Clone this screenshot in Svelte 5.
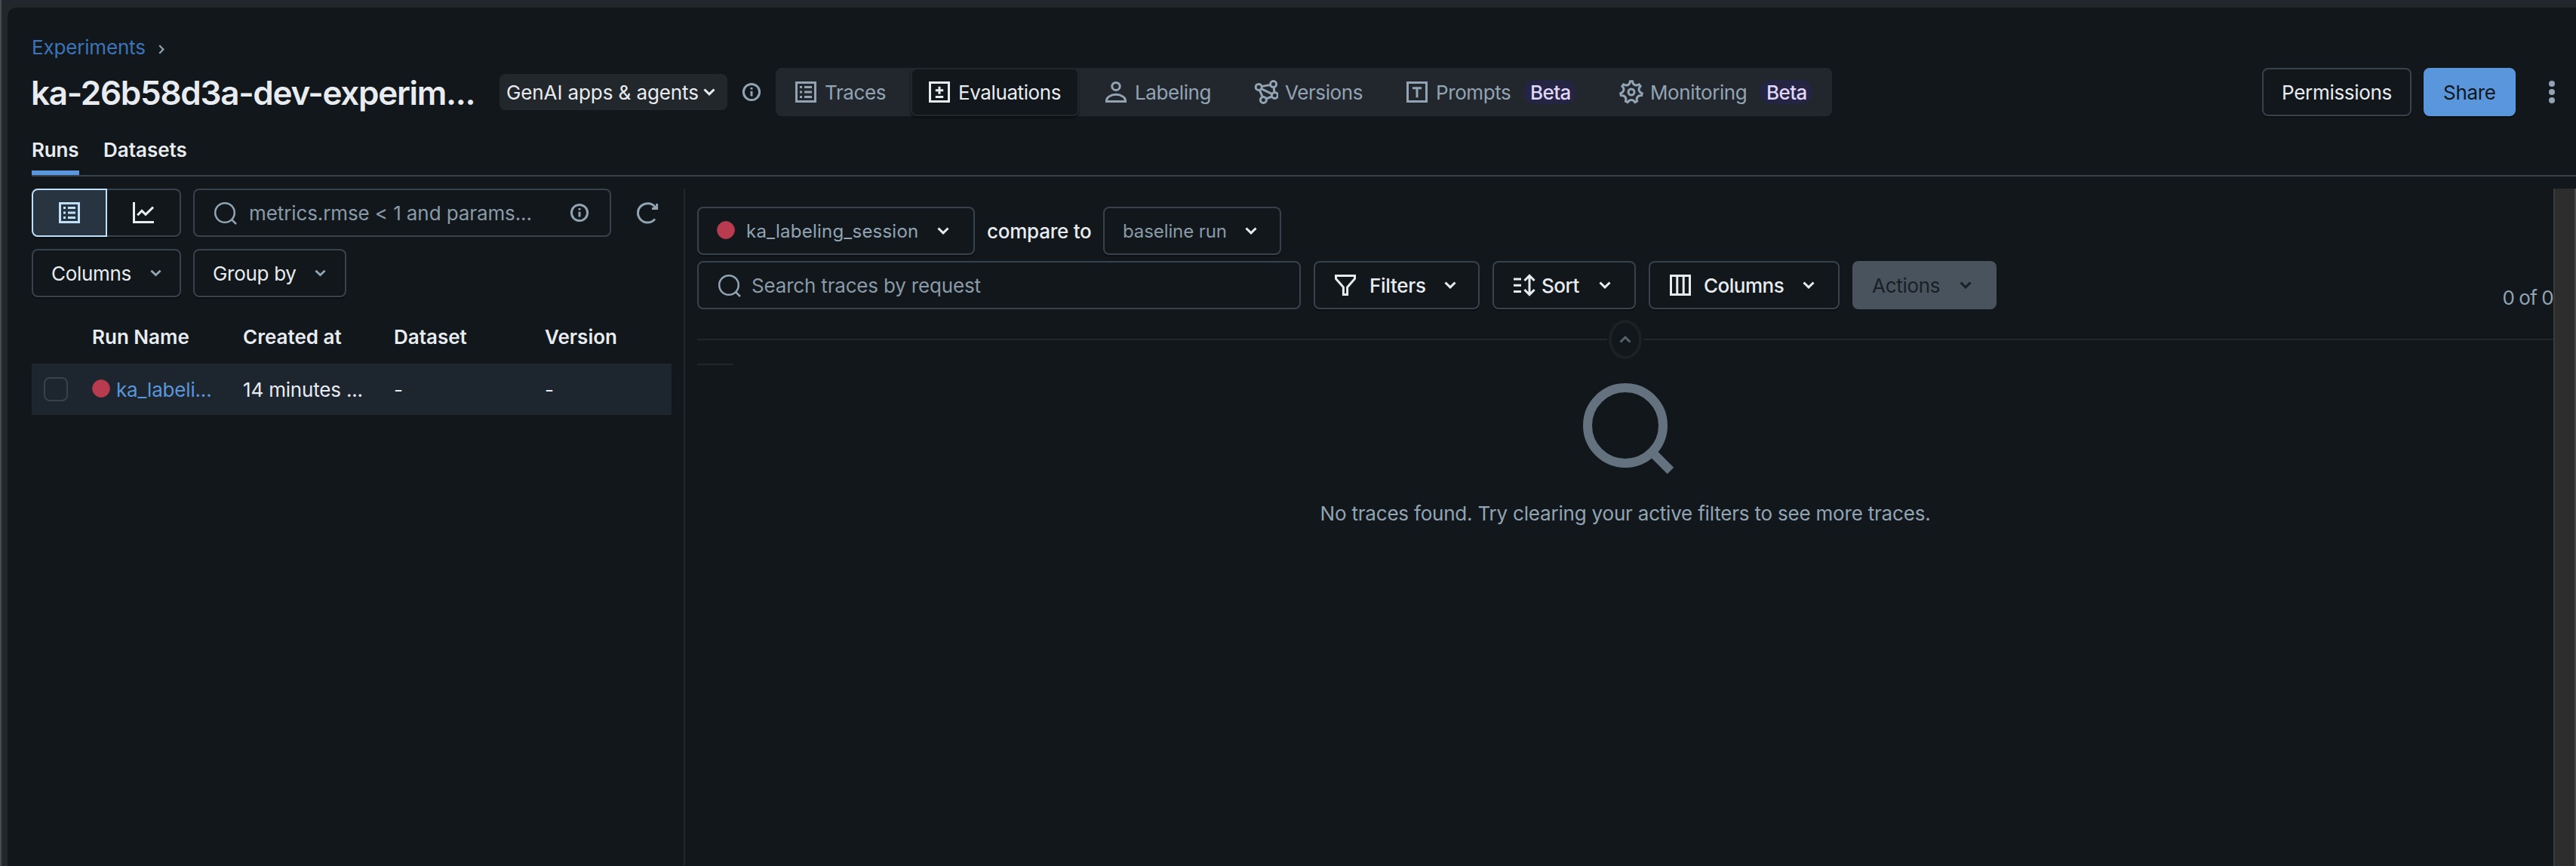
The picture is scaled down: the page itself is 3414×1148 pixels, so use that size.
<script>
  // Outline of the seven-toothed gear, in a 16-unit box
  function gearPath() {
    const pt = (r, deg) => {
      const a = ((deg - 90) * Math.PI) / 180;
      return `${(8 + r * Math.cos(a)).toFixed(2)} ${(8 + r * Math.sin(a)).toFixed(2)}`;
    };
    const step = 360 / 7;
    let d = '';
    for (let k = 0; k < 7; k++) {
      const a = k * step;
      d += `${k ? 'L' : 'M'}${pt(5.9, a - 11)}L${pt(7.2, a - 6)}L${pt(7.2, a + 6)}L${pt(5.9, a + 11)}Q${pt(4.7, a + step / 2)} ${pt(5.9, a + step - 11)}`;
    }
    return d + 'Z';
  }

  const box = 'M1.75 1.75h12.5v12.5H1.75z';
  const icons = {
    list: box + 'M4 4.75h1.5M7 4.75h5M4 8h1.5M7 8h5M4 11.25h1.5M7 11.25h5',
    plusminus: box + 'M5.4 6.9h5.2M8 4.4v5M5.4 11.2h5.2',
    user: 'M10.6 4.2a2.6 2.5 0 1 1-5.2 0a2.6 2.5 0 1 1 5.2 0zM1.75 14.25h12.5v-.6c0-1.9-2.6-4-6.25-4s-6.25 2.1-6.25 4z',
    models:
      'M5.1 4.7a2 2 0 1 1-4 0a2 2 0 1 1 4 0zM14.8 2.8a2 2 0 1 1-4 0a2 2 0 1 1 4 0zM15.7 10.2a2 2 0 1 1-4 0a2 2 0 1 1 4 0zM8.2 13.2a2 2 0 1 1-4 0a2 2 0 1 1 4 0zM5 4.3l5.9-1.1M4.7 5.8l7.3 3.5M3.6 6.6l2.1 4.7M13.1 4.8l.3 3.4M8 12.5l3.8-1.5',
    prompt: box + 'M5 5.4h6M8 5.4v6.2',
    gear: gearPath() + 'M10 8a2 2 0 1 1-4 0a2 2 0 1 1 4 0z',
    chart: 'M1.75 1v13.25H15M4.1 9.6l2.9-2.9 2.5 2.5 5-4.9',
    search: 'M14.4 8a6.4 6.4 0 1 1-12.8 0a6.4 6.4 0 1 1 12.8 0zM12.4 12.4l3.1 3.1',
    info: 'M13.3 8a5.3 5.3 0 1 1-10.6 0a5.3 5.3 0 1 1 10.6 0zM8 7.4v3.3M8 5v1.3',
    refresh: 'M13 12.2A6.35 6.35 0 1 1 13.4 4.7M14.3 2v3.3H11',
    filter: 'M1.75 1.75h12.5v2L9.3 9.4v4.85H6.7V9.4L1.75 3.75z',
    sort: 'M1 4h5M1 8.1h5M1 12.2h5M11.5 1.8v12.4M8.2 5l3.3-3.3L14.8 5M8.2 11l3.3 3.3 3.3-3.3',
    columns: box + 'M5.9 1.75v12.5M10.1 1.75v12.5'
  };

  const tabs = [
    { icon: 'list', label: 'Traces', cls: 'traces' },
    { icon: 'plusminus', label: 'Evaluations', cls: 'evals', active: true },
    { icon: 'user', label: 'Labeling', cls: 'labeling' },
    { icon: 'models', label: 'Versions', cls: 'versions' },
    { icon: 'prompt', label: 'Prompts', cls: 'prompts', beta: true },
    { icon: 'gear', label: 'Monitoring', cls: 'monitoring', beta: true }
  ];
</script>

{#snippet icon(name, thin)}
  <svg class="icon" class:thin viewBox="0 0 16 16"><path d={icons[name]} /></svg>
{/snippet}

{#snippet chevron()}
  <svg class="chev" viewBox="0 0 16 10"><path d="M1.5 1.5 8 7.8l6.5-6.3" /></svg>
{/snippet}

<div class="app">
  <main class="panel">
    <header>
      <nav class="crumbs">
        <span>Experiments</span>
        <svg viewBox="0 0 8 13"><path d="M1.2 1.2 6.4 6.5 1.2 11.8" /></svg>
      </nav>
      <div class="titlerow">
        <h1>ka-26b58d3a-dev-experim...</h1>
        <div class="kind"><span>GenAI apps &amp; agents</span>{@render chevron()}</div>
        <div class="kindinfo">{@render icon('info')}</div>
        <div class="modes">
          {#each tabs as t}
            <div class="mode {t.cls}" class:active={t.active}>
              {@render icon(t.icon)}<span>{t.label}</span>
              {#if t.beta}<em>Beta</em>{/if}
            </div>
          {/each}
        </div>
        <div class="spacer"></div>
        <button class="btn perms"><span>Permissions</span></button>
        <button class="btn share"><span>Share</span></button>
        <div class="kebab"><i></i><i></i><i></i></div>
      </div>
      <div class="subtabs">
        <div class="sub on"><span>Runs</span></div>
        <div class="sub"><span>Datasets</span></div>
      </div>
    </header>

    <div class="body">
      <section class="left">
        <div class="tools">
          <div class="seg">
            <div class="on">{@render icon('list')}</div>
            <div class="off">{@render icon('chart')}</div>
          </div>
          <div class="field runs">
            {@render icon('search', true)}<span>metrics.rmse &lt; 1 and params...</span>{@render icon('info')}
          </div>
          <div class="refresh">{@render icon('refresh')}</div>
        </div>
        <div class="tools second">
          <button class="btn cols"><span>Columns</span>{@render chevron()}</button>
          <button class="btn group"><span>Group by</span>{@render chevron()}</button>
        </div>
        <div class="thead">
          <span></span><span>Run Name</span><span>Created at</span><span>Dataset</span><span>Version</span>
        </div>
        <div class="trow">
          <span class="check"></span>
          <span class="run"><b class="dot"></b><a href="#run">ka_labeli...</a></span>
          <span>14 minutes ...</span>
          <span>-</span>
          <span>-</span>
        </div>
      </section>

      <section class="right">
        <div class="compare">
          <button class="btn sel session"><b class="dot"></b><span>ka_labeling_session</span>{@render chevron()}</button>
          <span class="cmp">compare to</span>
          <button class="btn sel base"><span>baseline run</span>{@render chevron()}</button>
        </div>
        <div class="filters">
          <div class="field traces">{@render icon('search', true)}<span>Search traces by request</span></div>
          <button class="btn tool f">{@render icon('filter')}<span>Filters</span>{@render chevron()}</button>
          <button class="btn tool s">{@render icon('sort')}<span>Sort</span>{@render chevron()}</button>
          <button class="btn tool c">{@render icon('columns')}<span>Columns</span>{@render chevron()}</button>
          <button class="btn tool a"><span>Actions</span>{@render chevron()}</button>
          <span class="count">0 of 0</span>
        </div>
        <div class="fold">
          <hr />
          <div class="knob">{@render chevron()}</div>
          <hr />
        </div>
        <div class="stub"></div>
        <div class="empty">
          <svg viewBox="0 0 120 120"><circle cx="56" cy="56" r="50" /><path d="M91 91l25 25" /></svg>
          <p>No traces found. Try clearing your active filters to see more traces.</p>
        </div>
      </section>
      <div class="track"></div>
    </div>
  </main>
</div>

<style>
  :global(body) { background: #22272b; overflow: hidden; }
  .app, .app * { box-sizing: border-box; }
  .app {
    width: 3414px; height: 1148px; padding: 10px 0 0 8px;
    border-left: 2px solid #484c50;
    background: linear-gradient(#22272f, #22272b 10px);
    font: 400 26px/32px Inter, "Liberation Sans", sans-serif;
    letter-spacing: -0.18px; color: #e8ecf0; white-space: nowrap; overflow: hidden;
  }
  .panel { display: flex; flex-direction: column; height: 1138px; background: #11171b; border-top-left-radius: 12px; }
  svg { fill: none; stroke: currentColor; flex: none; display: block; }
  .icon { width: 32px; height: 32px; stroke-width: 1.5; }
  .icon.thin { stroke-width: 1.25; }
  .chev { width: 16px; height: 10px; stroke-width: 3; }
  .spacer { flex: 1; }

  .crumbs { display: flex; align-items: center; height: 40px; margin: 33px 0 7px 32px; color: #3b74b8; }
  .crumbs svg { width: 8px; height: 13px; margin: 4px 0 0 17px; stroke: #92a4b3; stroke-width: 2.2; }
  .titlerow { display: flex; align-items: center; height: 64px; padding-left: 31px; }
  h1 { margin: 0; width: 621px; font-size: 44px; line-height: 64px; padding-top: 2px; font-weight: 600; letter-spacing: -1.28px; }
  .kind { display: flex; align-items: center; width: 302px; height: 48px; padding-left: 8px; border-radius: 8px; background: #22272b; }
  .kind span { width: 262px; padding: 1px 0 0 1px; letter-spacing: -0.1px; }
  .kindinfo { margin-left: 16px; color: #92a4b3; width: 48px; }
  .modes { display: flex; width: 1400px; height: 64px; border-radius: 8px; background: #22272e; color: #92a4b3; }
  .mode { display: flex; align-items: center; padding-left: 24px; letter-spacing: -0.4px; }
  .mode span { margin-left: 9px; padding-top: 1px; }
  .traces.mode { width: 179px; }
  .evals { width: 223px; }
  .labeling { width: 221px; padding-left: 33px; }
  .versions { width: 202px; padding-left: 11px; }
  .prompts { width: 284px; padding-left: 9px; }
  .monitoring { padding-left: 9px; }
  .mode.active { margin: 0; background: #11171b; border: 2px solid #22272b; border-radius: 8px; color: #e8ecf0; box-shadow: 0 2px 2px #0a0e11; padding-left: 20px; }
  .mode em { width: 70px; height: 32px; margin-left: 17px; padding: 1px 0 0 1px; border-radius: 16px; background: #242443; color: #e2d7fa; font-style: normal; font-weight: 500; text-align: center; letter-spacing: -0.6px; }

  .btn {
    display: flex; align-items: center; height: 64px; flex: none; padding: 0 0 0 24px;
    border: 2px solid #37424c; border-radius: 8px; background: #11171b; color: #e8ecf0;
    font: inherit; letter-spacing: -0.3px; box-shadow: 0 2px 0 #0b0f12; text-align: left;
  }
  .btn span { padding-top: 1px; }
  .perms { width: 198px; margin-right: 16px; }
  .share { width: 122px; background: #5a96db; border-color: #5a96db; color: #11171b; }
  .kebab { display: flex; flex-direction: column; gap: 3px; align-items: center; margin: 0 27px 0 43px; width: 10px; }
  .kebab i { width: 8px; height: 8px; border-radius: 50%; background: #92a4b3; }

  .subtabs { display: flex; height: 62px; margin: 18px 0 16px 32px; border-bottom: 2px solid #37424c; font-weight: 600; }
  .sub { height: 60px; margin-right: 32px; border-bottom: 6px solid transparent; line-height: 54px; letter-spacing: 0; }
  .sub.on { width: 63px; border-color: #5a96db; letter-spacing: -0.2px; }

  .body { display: flex; flex: 1; }
  .left { width: 898px; padding-left: 32px; border-right: 2px solid #22272b; }
  .tools { display: flex; gap: 16px; height: 64px; }
  .second { margin-top: 16px; }
  .seg { display: flex; width: 198px; box-shadow: 0 2px 0 #0b0f12; border-radius: 8px; }
  .seg div { display: flex; align-items: center; justify-content: center; border: 2px solid #37424c; }
  .seg .on { width: 100px; background: #28343f; border-color: #bfe0fb; color: #bfe0fb; border-radius: 8px 0 0 8px; }
  .seg .off { width: 98px; border-left: 0; border-radius: 0 8px 8px 0; }
  .field { display: flex; align-items: center; height: 64px; border: 2px solid #37424c; border-radius: 8px; padding-left: 24px; color: #8a9aa8; }
  .field .icon { color: #92a4b3; }
  .field.runs { width: 554px; }
  .field.runs span { width: 438px; padding: 1px 0 0 16px; letter-spacing: -0.1px; }
  .refresh { display: flex; align-items: center; margin-left: 16px; color: #92a4b3; }
  .cols { width: 198px; }
  .cols span { width: 131px; }
  .group { width: 203px; }
  .group span { width: 135px; }
  .second .chev { width: 15px; color: #92a4b3; }
  .thead, .trow { display: grid; grid-template-columns: 80px 200px 200px 200px 168px; align-items: center; width: 848px; }
  .thead { height: 88px; padding-top: 18px; font-weight: 600; letter-spacing: 0; }
  .trow { height: 68px; background: #1d252e; border: solid #22272b; border-width: 2px 0; }
  .check { width: 32px; height: 32px; margin-left: 16px; border: 2px solid #37424c; border-radius: 8px; }
  .dot { width: 24px; height: 24px; border: 1px solid #a5384a; border-radius: 50%; background: #b83b4f; flex: none; }
  .run { display: flex; align-items: center; }
  .run .dot { margin: -4px 8px 0 0; }
  .run a { color: #5a96db; text-decoration: none; }
  .trow > span:nth-child(n + 2) { padding-top: 2px; }

  .right { width: 2476px; padding: 24px 0 0 16px; }
  .compare, .filters { display: flex; align-items: center; height: 64px; }
  .filters { margin-top: 8px; }
  .sel { font-size: 24px; color: #92a4b3; }
  .sel .chev { color: #e8ecf0; }
  .session { width: 368px; letter-spacing: 0.22px; }
  .session .dot { margin: -2px 15px 0 0; }
  .session span { width: 253px; }
  .cmp { width: 170px; padding: 2px 0 0 16px; font-weight: 500; letter-spacing: -0.25px; }
  .base { width: 236px; letter-spacing: -0.1px; color: #8a9aa8; }
  .base span { width: 162px; }
  .field.traces { width: 800px; }
  .field.traces span { padding: 1px 0 0 14px; }
  .tool { margin-left: 17px; font-weight: 500; }
  .f { width: 220px; }
  .f span { width: 115px; padding-left: 16px; }
  .s { width: 190px; }
  .s span { width: 83px; padding-left: 7px; letter-spacing: -0.5px; }
  .c { width: 253px; }
  .c span { width: 146px; padding-left: 15px; letter-spacing: -0.5px; }
  .a { width: 191px; background: #48535e; border-color: #48535e; color: #181f25; font-weight: 400; box-shadow: none; }
  .a span { width: 116px; }
  .count { flex: 1; align-self: flex-end; height: 32px; margin-bottom: -1px; text-align: right; color: #92a4b3; letter-spacing: -0.6px; word-spacing: -0.8px; }
  .fold { display: flex; align-items: center; height: 52px; margin-top: 14px; }
  .fold hr { flex: none; height: 2px; margin: 0; border: 0; background: #22272b; }
  .fold hr:first-child { width: 1206px; }
  .fold hr:last-child { flex: 1; }
  .knob { display: flex; align-items: center; justify-content: center; width: 44px; height: 52px; margin: 0 2px; border: 4px solid #1b2125; border-radius: 50%; color: #55616b; }
  .knob .chev { transform: rotate(180deg); }
  .stub { width: 48px; height: 2px; margin-top: 6px; background: #22272b; }
  .empty { display: flex; flex-direction: column; align-items: center; margin-top: 24px; }
  .empty svg { width: 120px; height: 120px; margin-left: 8px; stroke: #64727f; stroke-width: 12; }
  .empty p { margin: 37px 0 0; color: #92a4b3; letter-spacing: -0.2px; }
  .track { width: 30px; background: #2d2d2d; border-left: 2px solid #3b3b3b; border-right: 2px solid #4a4a4a; }
</style>
